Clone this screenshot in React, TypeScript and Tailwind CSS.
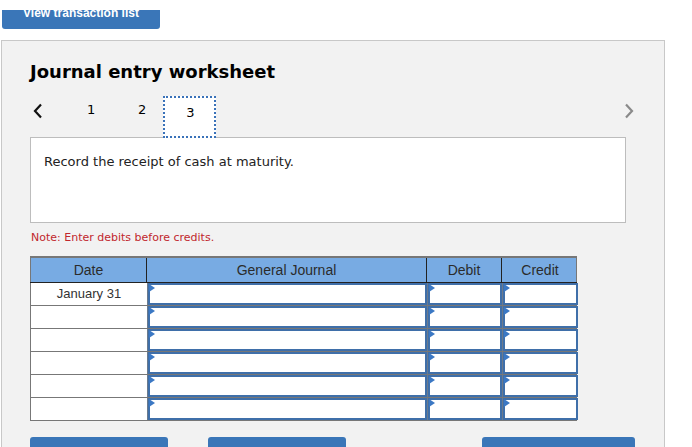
import React from "react";

const verdana = { fontFamily: '"DejaVu Sans", Verdana, sans-serif' };
const arial = { fontFamily: '"Liberation Sans", Arial, sans-serif' };

function EntryCell() {
  return (
    <div className="relative h-full border-2 border-[#3f6fa9] bg-white">
      <svg className="absolute -left-[1px] -top-[1px]" width="7" height="8" viewBox="0 0 7 8">
        <path d="M0 0 L6 4 L0 8 Z" fill="#3b78c4" />
      </svg>
    </div>
  );
}

export default function App() {
  const rows = ["January 31", "", "", "", "", ""];
  return (
    <div className="relative h-[447px] w-[692px] overflow-hidden bg-white" style={arial}>
      <div className="ml-[2px] mt-[10px] h-[19px] w-[158px] overflow-hidden rounded-b-[3px] bg-[#3a76b8]">
        <div className="-mt-[5px] text-center text-[12px] font-bold leading-[16px] text-white">
          View transaction list
        </div>
      </div>

      <div className="ml-[1px] mt-[11px] h-[420px] w-[664px] border border-[#c8c8c8] bg-[#f2f2f2]">
        <h1 className="ml-[28px] mt-[20px] text-[18px] font-bold leading-[22px] text-black" style={verdana}>
          Journal entry worksheet
        </h1>

        <div className="relative mt-[13px] flex h-[42px] items-start">
          <svg className="ml-[30px] mt-[7px]" width="12" height="16" viewBox="0 0 12 16">
            <path d="M9 1.5 L3 8 L9 14.5" fill="none" stroke="#111" strokeWidth="2.2" />
          </svg>
          <span className="ml-[43px] mt-[6px] w-[10px] text-[13px] leading-[16px] text-black" style={verdana}>1</span>
          <span className="ml-[41px] mt-[6px] w-[10px] text-[13px] leading-[16px] text-black" style={verdana}>2</span>
          <div
            className="ml-[15px] flex h-[42px] w-[53px] justify-center border-2 border-dotted border-[#3a72b9] bg-white pl-[2px] pt-[7px] text-[13px] leading-[16px] text-black"
            style={verdana}
          >
            3
          </div>
          <svg className="absolute left-[621px] top-[7px]" width="12" height="16" viewBox="0 0 12 16">
            <path d="M3 1.5 L9 8 L3 14.5" fill="none" stroke="#8a8a8a" strokeWidth="2.2" />
          </svg>
        </div>

        <div className="ml-[28px] -mt-[1px] h-[86px] w-[596px] border border-[#bdbdbd] bg-white px-[13px] pt-[14px] text-[13px] text-[#222]" style={verdana}>
          Record the receipt of cash at maturity.
        </div>

        <p className="ml-[29px] mt-[8px] text-[11px] leading-[14px] text-[#c1272d]" style={verdana}>
          Note: Enter debits before credits.
        </p>

        <div className="ml-[28px] mt-[11px] w-[547px]">
          <div className="grid h-[26px] grid-cols-[116px_280px_75px_76px] border-t-2 border-l border-r border-[#777] bg-[#78abe3] text-[14px] text-[#2b2b2b]">
            <div className="flex items-center justify-center border-r border-[#222]">Date</div>
            <div className="flex items-center justify-center border-r border-[#222]">General Journal</div>
            <div className="flex items-center justify-center border-r border-[#222]">Debit</div>
            <div className="flex items-center justify-center">Credit</div>
          </div>
          <div className="border-t border-[#222]">
            {rows.map((d, i) => (
              <div key={i} className="grid h-[23px] grid-cols-[116px_280px_75px_76px] border-b border-l border-r border-[#777] bg-[#6b7a8c]">
                <div className="flex items-center justify-center bg-white text-[13px] text-[#333]">{d}</div>
                <div className="pl-[1px]"><EntryCell /></div>
                <div className="pl-[1px]"><EntryCell /></div>
                <div className="pl-[1px]"><EntryCell /></div>
              </div>
            ))}
          </div>
        </div>

        <div className="ml-[28px] mt-[16px] flex">
          <div className="h-[20px] w-[138px] rounded-t-[3px] bg-[#3a76b8]" />
          <div className="ml-[40px] h-[20px] w-[138px] rounded-t-[3px] bg-[#3a76b8]" />
          <div className="ml-[136px] h-[20px] w-[153px] rounded-t-[3px] bg-[#3a76b8]" />
        </div>
      </div>
    </div>
  );
}
